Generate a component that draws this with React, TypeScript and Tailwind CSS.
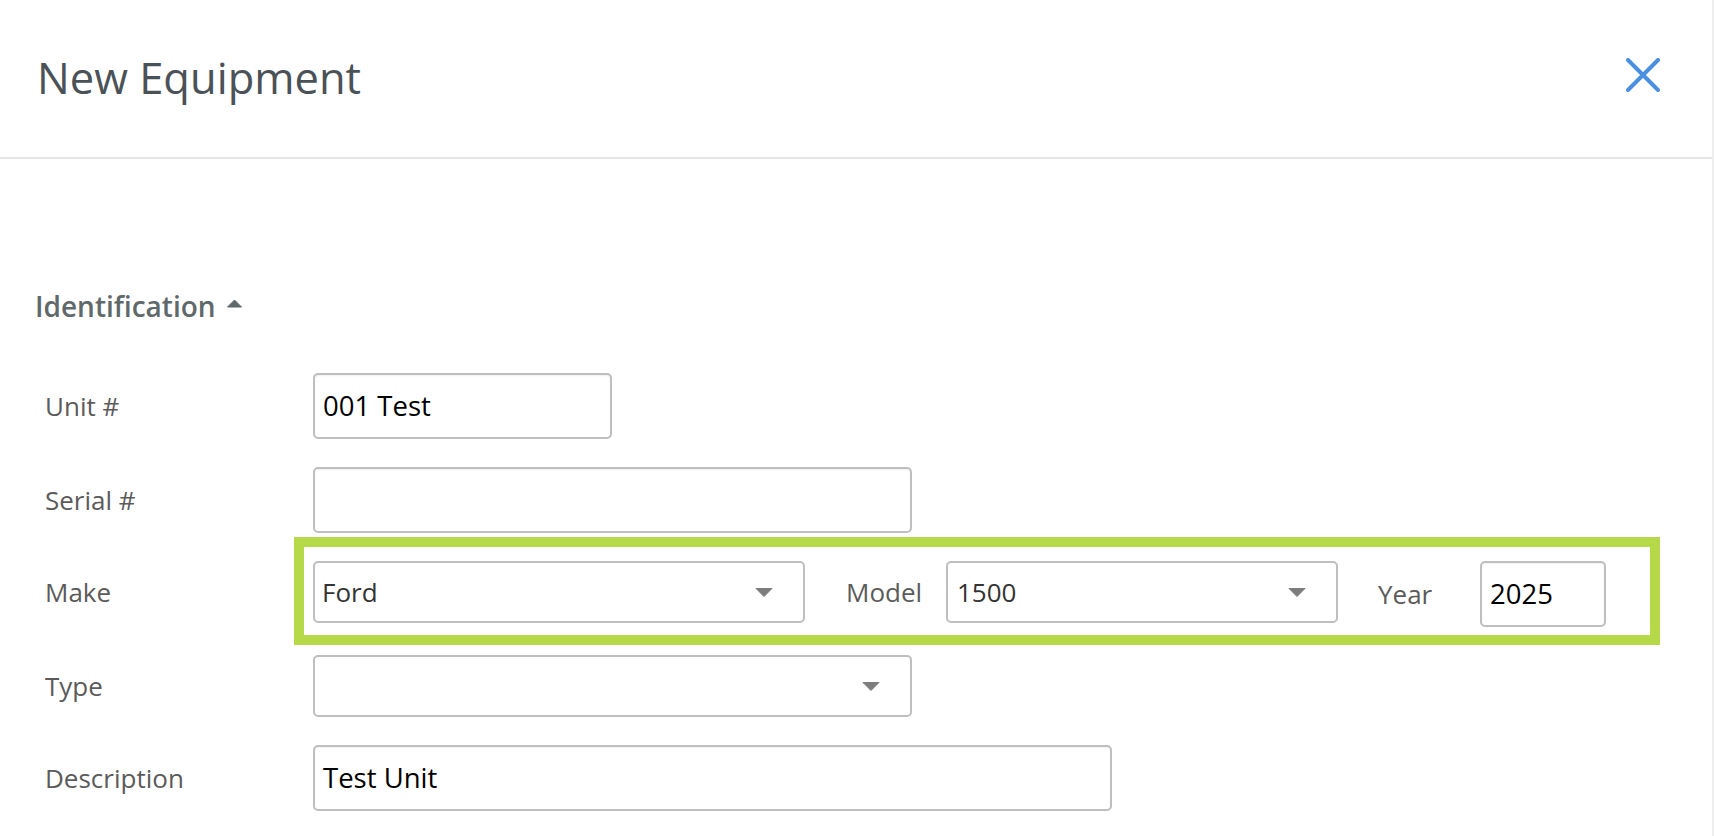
import React from "react";

const Arrow = () => (
  <svg width="18" height="9" viewBox="0 0 18 9" className="shrink-0">
    <path d="M1 0.5 H17 L9 8.5 Z" fill="#7d7d7d" stroke="#7d7d7d" strokeLinejoin="round" />
  </svg>
);

const inputCls =
  "h-[66px] border-2 border-[#bfbfbf] rounded-[5px] bg-white shadow-[inset_0_1px_2px_rgba(0,0,0,0.06)] flex items-center pl-[8px] text-[27.5px] text-black";

const selectCls =
  "h-[62px] border-2 border-[#bfbfbf] rounded-[5px] bg-white flex items-center justify-between pl-[7px] pr-[30px] text-[26px] text-[#333333]";

function Label({ children, h }: { children: React.ReactNode; h: string }) {
  return (
    <div className={`w-[268px] shrink-0 flex items-center text-[26px] text-[#5b5b5b] ${h}`}>{children}</div>
  );
}

export default function App() {
  return (
    <div className="w-[1714px] h-[836px] bg-white overflow-hidden border-r-2 border-[#eeeeee] font-['Open_Sans',sans-serif]">
      <div className="h-[159px] border-b-2 border-[#e6e6e6] flex items-center justify-between pl-[37px] pr-[52px]">
        <div className="text-[43.5px] text-[#4b5257] leading-[58px] mb-[2px]">New Equipment</div>
        <svg width="34" height="34" viewBox="0 0 34 34" className="mb-[8px]">
          <path d="M2 2 L32 32 M32 2 L2 32" stroke="#4a8fe0" strokeWidth="4" strokeLinecap="round" />
        </svg>
      </div>

      <div className="mt-[129px] pl-[35px] flex items-center h-[36px]">
        <span className="text-[28px] font-semibold text-[#5f696b] leading-[36px]">Identification</span>
        <svg width="17" height="9" viewBox="0 0 17 9" className="ml-[10px] mt-[-6px]">
          <path d="M1.5 8 H15.5 L8.5 1 Z" fill="#5f696b" stroke="#5f696b" strokeLinejoin="round" />
        </svg>
      </div>

      <div className="mt-[49px] pl-[45px] flex flex-col gap-[28px]">
        <div className="flex items-start">
          <Label h="h-[66px]">Unit #</Label>
          <div className={`${inputCls} w-[299px]`}>001 Test</div>
        </div>

        <div className="flex items-start">
          <Label h="h-[66px]">Serial #</Label>
          <div className={`${inputCls} w-[599px]`}></div>
        </div>

        <div className="flex items-start">
          <Label h="h-[62px]">Make</Label>
          <div className="relative flex items-start">
            <div className={`${selectCls} w-[492px]`}>
              <span>Ford</span>
              <Arrow />
            </div>
            <div className="w-[141px] h-[62px] pl-[41px] flex items-center text-[26px] text-[#5b5b5b]">Model</div>
            <div className={`${selectCls} w-[392px] pl-[9px]`}>
              <span>1500</span>
              <Arrow />
            </div>
            <div className="w-[142px] h-[66px] pl-[40px] flex items-center text-[26px] text-[#5b5b5b]">Year</div>
            <div className={`${inputCls} w-[126px]`}>2025</div>
            <div className="absolute left-[-19px] top-[-24px] w-[1366px] h-[108px] border-[10px] border-[#b6d94a] pointer-events-none"></div>
          </div>
        </div>

        <div className="flex items-start">
          <Label h="h-[62px]">Type</Label>
          <div className={`${selectCls} w-[599px]`}>
            <span></span>
            <Arrow />
          </div>
        </div>

        <div className="flex items-start">
          <Label h="h-[66px]">Description</Label>
          <div className={`${inputCls} w-[799px]`}>Test Unit</div>
        </div>
      </div>
    </div>
  );
}
